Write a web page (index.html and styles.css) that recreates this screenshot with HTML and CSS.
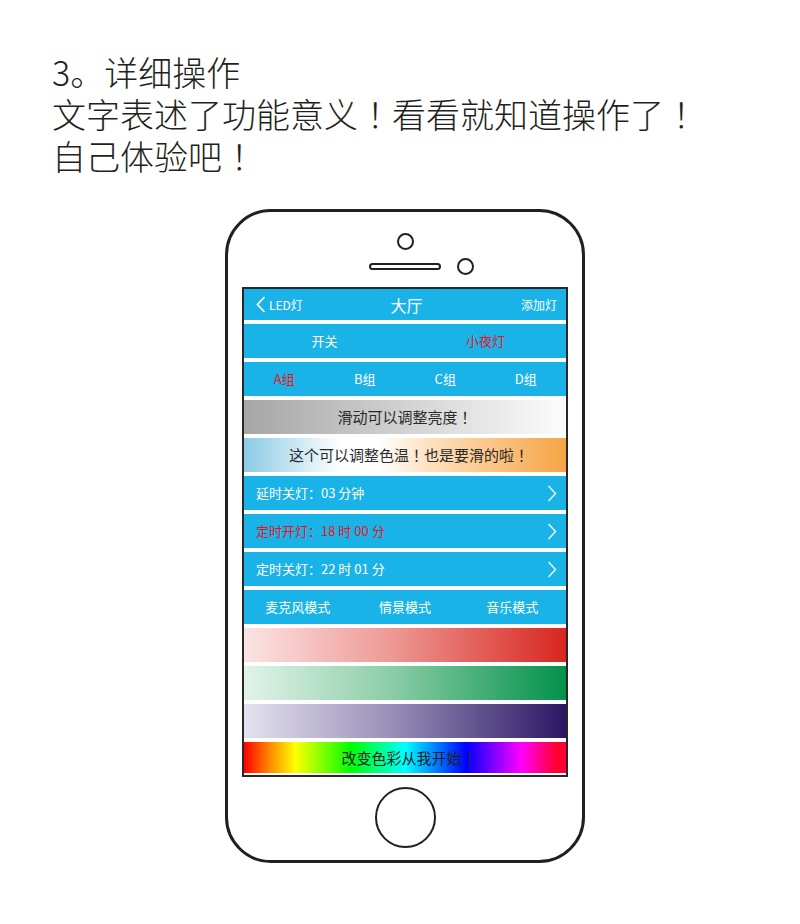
FILE: index.html
```html
<!DOCTYPE html>
<html lang="zh-CN">
<head>
<meta charset="utf-8">
<title>详细操作</title>
<link rel="stylesheet" href="styles.css">
</head>
<body>
<div class="intro">
  <p>3。详细操作</p>
  <p>文字表述了功能意义<span class="hp">！</span>看看就知道操作了<span class="hp">！</span></p>
  <p>自己体验吧<span class="hp">！</span></p>
</div>

<div class="phone">
  <div class="camera"></div>
  <div class="earpiece">
    <span class="ghost"></span>
    <span class="speaker"></span>
    <span class="sensor"></span>
  </div>

  <div class="screen">
    <div class="bar header">
      <div class="back">
        <svg class="chev" width="10" height="17" viewBox="0 0 10 17"><polyline points="8.5,1 1.5,8.5 8.5,16" fill="none" stroke="#ffffff" stroke-width="1.7"/></svg>
        <span>LED灯</span>
      </div>
      <div class="title">大厅</div>
      <div class="add">添加灯</div>
    </div>

    <div class="bar split">
      <span>开关</span>
      <span class="red">小夜灯</span>
    </div>

    <div class="bar split">
      <span class="red">A组</span>
      <span>B组</span>
      <span>C组</span>
      <span>D组</span>
    </div>

    <div class="bar slider bright">滑动可以调整亮度<span class="pc">！</span></div>
    <div class="bar slider temp">这个可以调整色温<span class="pc">！</span>也是要滑的啦<span class="pc">！</span></div>

    <div class="bar timer">
      <span>延时关灯<span class="pc">：</span>03 分钟</span>
      <svg width="10" height="17" viewBox="0 0 10 17"><polyline points="1.5,1 8.5,8.5 1.5,16" fill="none" stroke="#e6f6fd" stroke-width="1.5"/></svg>
    </div>
    <div class="bar timer">
      <span class="red">定时开灯<span class="pc">：</span>18 时 00 分</span>
      <svg width="10" height="17" viewBox="0 0 10 17"><polyline points="1.5,1 8.5,8.5 1.5,16" fill="none" stroke="#e6f6fd" stroke-width="1.5"/></svg>
    </div>
    <div class="bar timer">
      <span>定时关灯<span class="pc">：</span>22 时 01 分</span>
      <svg width="10" height="17" viewBox="0 0 10 17"><polyline points="1.5,1 8.5,8.5 1.5,16" fill="none" stroke="#e6f6fd" stroke-width="1.5"/></svg>
    </div>

    <div class="bar split">
      <span>麦克风模式</span>
      <span>情景模式</span>
      <span>音乐模式</span>
    </div>

    <div class="bar grad red-grad"></div>
    <div class="bar grad green-grad"></div>
    <div class="bar grad purple-grad"></div>
    <div class="bar slider rainbow">改变色彩从我开始<span class="pc">！</span></div>
  </div>

  <div class="home"></div>
</div>
</body>
</html>
```

FILE: styles.css
```css
* { box-sizing: border-box; }

html, body {
  margin: 0;
  padding: 0;
  background: #ffffff;
}

body {
  width: 800px;
  height: 924px;
  font-family: "Noto Sans CJK SC", "Noto Sans", sans-serif;
  color: #231f20;
  overflow: hidden;
}

.pc {
  font-family: "Noto Sans CJK JP", "Noto Sans CJK SC", sans-serif;
}

.intro {
  padding: 51px 0 0 52px;
}

.intro p {
  margin: 0;
  font-size: 34px;
  line-height: 42px;
  font-weight: 300;
  color: #231f20;
  white-space: nowrap;
}

.hp {
  padding-left: 0.26em;
  margin-right: -0.26em;
}

.phone {
  margin: 32px 0 0 225px;
  width: 360px;
  height: 654px;
  border: 3px solid #231f20;
  border-radius: 46px;
  background: #ffffff;
  display: flex;
  flex-direction: column;
  align-items: center;
  padding-top: 21px;
}

.camera {
  width: 17px;
  height: 17px;
  border: 2.5px solid #231f20;
  border-radius: 50%;
}

.earpiece {
  margin-top: 8px;
  display: flex;
  align-items: center;
  gap: 16px;
  height: 17px;
}

.ghost {
  width: 17px;
  height: 17px;
}

.speaker {
  width: 72px;
  height: 7px;
  border: 2px solid #231f20;
  border-radius: 4px;
}

.sensor {
  width: 17px;
  height: 17px;
  border: 2.5px solid #231f20;
  border-radius: 50%;
}

.screen {
  margin-top: 12px;
  width: 326px;
  height: 490px;
  border: 2px solid #2b2728;
  background: #ffffff;
  display: flex;
  flex-direction: column;
  gap: 4px;
  padding-bottom: 2px;
}

.bar {
  flex: none;
  height: 34px;
  display: flex;
  align-items: center;
  background: #1ab3e8;
  color: #ffffff;
  font-size: 13px;
  line-height: 16px;
}

.header {
  height: 31px;
  display: grid;
  grid-template-columns: 1fr auto 1fr;
  align-items: center;
  padding: 0 9px 0 12px;
}

.back {
  display: flex;
  align-items: center;
  gap: 3px;
  font-size: 12px;
}

.chev {
  display: block;
}

.title {
  font-size: 16px;
  line-height: 20px;
}

.add {
  justify-self: end;
  font-size: 12px;
}

.split > span {
  flex: 1 1 0;
  text-align: center;
}

.red {
  color: #e8141c;
}

.slider {
  justify-content: center;
  color: #2a2a2a;
  font-size: 15px;
  line-height: 18px;
}

.bright {
  background: linear-gradient(to right, #a6a6a6 0%, #d2d2d2 50%, #fcfcfc 100%);
}

.temp {
  background: linear-gradient(to right, #8ccbe6 0%, #ffffff 30%, #ffffff 42%, #fde0bd 58%, #f6a444 100%);
  padding-left: 8px;
}

.timer {
  justify-content: space-between;
  padding: 0 9px 0 12px;
}

.timer svg {
  display: block;
}

.red-grad {
  background: linear-gradient(to right, #fbe4e4 0%, #ee9a96 45%, #d8261f 100%);
}

.green-grad {
  background: linear-gradient(to right, #e2f3ea 0%, #8dcea8 45%, #03914a 100%);
}

.purple-grad {
  background: linear-gradient(to right, #e4e2ef 0%, #9a90b9 45%, #2a1764 100%);
}

.rainbow {
  height: 31px;
  color: #222222;
  padding-left: 8px;
  background: linear-gradient(to right,
    #ff0000 0%,
    #ff8a00 8%,
    #ffff00 16%,
    #00ff00 33%,
    #00ffff 50%,
    #0000ff 69%,
    #ff00ff 86%,
    #ff0030 97%,
    #ff0030 100%);
}

.home {
  margin-top: 10px;
  width: 61px;
  height: 61px;
  border: 2.5px solid #231f20;
  border-radius: 50%;
}
```
